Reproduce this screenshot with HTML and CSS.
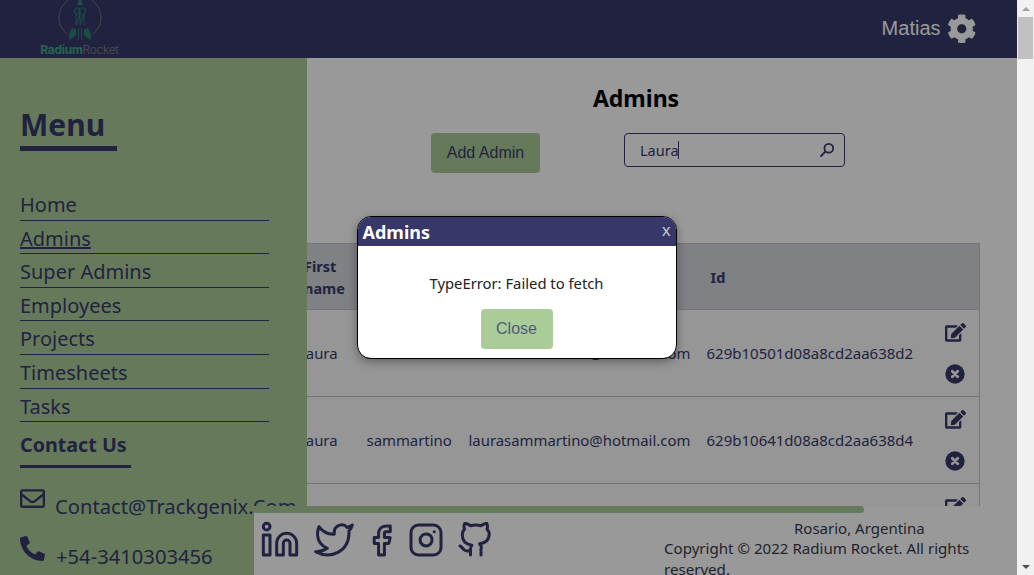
FILE: index.html
```html
<!DOCTYPE html>
<html lang="en">
<head>
<meta charset="utf-8">
<title>Admins</title>
<link rel="stylesheet" href="styles.css">
</head>
<body>
<div class="window">
  <div class="page">
    <header class="topbar">
      <div class="logo">
        <svg class="logo-mark" viewBox="0 0 44 40" aria-hidden="true">
          <path class="logo-ring" d="M9 33A21 21 0 1 1 35 33"/>
          <path class="logo-body" d="M22 -4L25 4H19Z"/>
          <path class="logo-line" d="M17 7H27M18 7C16 9 16 11 18 13V24M22 7V24M18 13H22M22 7C20 9 20 11 22 13M26 7C28 9 28 11 26 13V24M22 13H26M22 13L18 24M26 13L22 24"/>
          <path class="logo-body" d="M14 27L11 33V39L17 35H18V28ZM30 27L33 33V39L27 35H26V28ZM20 27H21V39H20ZM23 27H24V39H23Z"/>
        </svg>
        <div class="logo-text"><b>Radium</b><span>Rocket</span></div>
      </div>
      <div class="user">
        <span class="user-name">Matias</span>
        <svg class="gear" viewBox="0 0 512 512" aria-hidden="true"><path d="M487.4 315.7l-42.6-24.6c4.3-23.2 4.3-47 0-70.2l42.6-24.6c4.9-2.8 7.1-8.6 5.5-14-11.1-35.6-30-67.8-54.7-94.6-3.8-4.1-10-5.1-14.8-2.3L380.8 110c-17.9-15.4-38.5-27.3-60.8-35.1V25.8c0-5.6-3.9-10.5-9.4-11.7-36.7-8.2-74.3-7.8-109.2 0-5.5 1.2-9.4 6.1-9.4 11.7V75c-22.2 7.9-42.8 19.8-60.8 35.1L88.7 85.5c-4.9-2.8-11-1.9-14.8 2.3-24.7 26.7-43.6 58.9-54.7 94.6-1.7 5.4.6 11.2 5.5 14L67.3 221c-4.3 23.2-4.3 47 0 70.2l-42.6 24.6c-4.9 2.8-7.1 8.6-5.5 14 11.1 35.6 30 67.8 54.7 94.6 3.8 4.1 10 5.1 14.8 2.3l42.6-24.6c17.9 15.4 38.5 27.3 60.8 35.1v49.2c0 5.6 3.9 10.5 9.4 11.7 36.7 8.2 74.3 7.8 109.2 0 5.5-1.2 9.4-6.1 9.4-11.7v-49.2c22.2-7.9 42.8-19.8 60.8-35.1l42.6 24.6c4.9 2.8 11 1.9 14.8-2.3 24.7-26.7 43.6-58.9 54.7-94.6 1.5-5.5-.7-11.3-5.6-14.1zM256 336c-44.1 0-80-35.9-80-80s35.9-80 80-80 80 35.9 80 80-35.9 80-80 80z"/></svg>
      </div>
    </header>
    <div class="layout">
      <aside class="sidebar">
        <h2 class="menu-title">Menu</h2>
        <nav class="menu">
          <a class="menu-item">Home</a>
          <a class="menu-item menu-item-active">Admins</a>
          <a class="menu-item">Super Admins</a>
          <a class="menu-item">Employees</a>
          <a class="menu-item">Projects</a>
          <a class="menu-item">Timesheets</a>
          <a class="menu-item">Tasks</a>
        </nav>
        <h3 class="contact-title">Contact Us</h3>
        <div class="contact-line contact-mail">
          <svg class="contact-icon" viewBox="0 0 512 512" aria-hidden="true"><path d="M464 64H48C21.49 64 0 85.49 0 112v288c0 26.51 21.49 48 48 48h416c26.51 0 48-21.49 48-48V112c0-26.51-21.49-48-48-48zm0 48v40.805c-22.422 18.259-58.168 46.651-134.587 106.49-16.841 13.247-50.201 45.072-73.413 44.701-23.208.375-56.579-31.459-73.413-44.701C106.18 199.465 70.425 171.067 48 152.805V112h416zM48 400V214.398c22.914 18.251 55.409 43.862 104.938 82.646 21.857 17.205 60.134 55.186 103.062 54.955 42.717.231 80.509-37.199 103.053-54.947 49.528-38.783 82.032-64.401 104.947-82.653V400H48z"/></svg>
          <span>Contact@Trackgenix.Com</span>
        </div>
        <div class="contact-line contact-phone">
          <svg class="contact-icon" viewBox="0 0 512 512" aria-hidden="true"><path d="M497.39 361.8l-112-48a24 24 0 0 0-28 6.9l-49.6 60.6A370.66 370.66 0 0 1 130.6 204.11l60.6-49.6a23.94 23.94 0 0 0 6.9-28l-48-112A24.16 24.16 0 0 0 122.6.61l-104 24A24 24 0 0 0 0 48c0 256.5 207.9 464 464 464a24 24 0 0 0 23.4-18.6l24-104a24.29 24.29 0 0 0-14.01-27.6z"/></svg>
          <span>+54-3410303456</span>
        </div>
      </aside>
      <div class="content-column">
        <main class="content">
          <h1 class="page-title">Admins</h1>
          <div class="toolbar">
            <button class="add-button">Add Admin</button>
            <div class="search">
              <span class="search-text">Laura</span><span class="caret"></span>
              <svg class="search-icon" viewBox="0 0 16 16" aria-hidden="true"><circle cx="9.8" cy="6.2" r="4.4"/><path d="M6.6 9.4L2 14"/></svg>
            </div>
          </div>
          <table class="admins">
            <colgroup>
              <col class="col-first"><col class="col-last"><col class="col-email"><col class="col-id"><col class="col-actions">
            </colgroup>
            <thead>
              <tr><th class="th-first">First name</th><th></th><th></th><th class="th-id">Id</th><th></th></tr>
            </thead>
            <tbody>
              <tr>
                <td>Laura</td><td>sammartino</td><td>laurasammartino@hotmail.com</td><td class="td-id">629b10501d08a8cd2aa638d2</td>
                <td class="td-actions"><div class="actions">
                  <svg class="edit" viewBox="0 0 576 512" aria-hidden="true"><path d="M402.6 83.2l90.2 90.2c3.8 3.8 3.8 10 0 13.8L274.4 405.6l-92.8 10.3c-12.4 1.4-22.9-9.1-21.5-21.5l10.3-92.8L388.8 83.2c3.8-3.8 10-3.8 13.8 0zm162-22.9l-48.8-48.8c-15.2-15.2-39.9-15.2-55.2 0l-35.4 35.4c-3.8 3.8-3.8 10 0 13.8l90.2 90.2c3.8 3.8 10 3.8 13.8 0l35.4-35.4c15.2-15.3 15.2-40 0-55.2zM384 346.2V448H64V128h229.8c3.2 0 6.2-1.3 8.5-3.5l40-40c7.6-7.6 2.2-20.5-8.5-20.5H48C21.5 64 0 85.5 0 112v352c0 26.5 21.5 48 48 48h352c26.5 0 48-21.5 48-48V306.2c0-10.7-12.9-16-20.5-8.5l-40 40c-2.2 2.3-3.5 5.3-3.5 8.5z"/></svg>
                  <svg class="remove" viewBox="0 0 512 512" aria-hidden="true"><circle class="remove-disc" cx="256" cy="256" r="248"/><path class="remove-x" d="M186 186L326 326M326 186L186 326"/></svg>
                </div></td>
              </tr>
              <tr>
                <td>Laura</td><td>sammartino</td><td>laurasammartino@hotmail.com</td><td class="td-id">629b10641d08a8cd2aa638d4</td>
                <td class="td-actions"><div class="actions">
                  <svg class="edit" viewBox="0 0 576 512" aria-hidden="true"><path d="M402.6 83.2l90.2 90.2c3.8 3.8 3.8 10 0 13.8L274.4 405.6l-92.8 10.3c-12.4 1.4-22.9-9.1-21.5-21.5l10.3-92.8L388.8 83.2c3.8-3.8 10-3.8 13.8 0zm162-22.9l-48.8-48.8c-15.2-15.2-39.9-15.2-55.2 0l-35.4 35.4c-3.8 3.8-3.8 10 0 13.8l90.2 90.2c3.8 3.8 10 3.8 13.8 0l35.4-35.4c15.2-15.3 15.2-40 0-55.2zM384 346.2V448H64V128h229.8c3.2 0 6.2-1.3 8.5-3.5l40-40c7.6-7.6 2.2-20.5-8.5-20.5H48C21.5 64 0 85.5 0 112v352c0 26.5 21.5 48 48 48h352c26.5 0 48-21.5 48-48V306.2c0-10.7-12.9-16-20.5-8.5l-40 40c-2.2 2.3-3.5 5.3-3.5 8.5z"/></svg>
                  <svg class="remove" viewBox="0 0 512 512" aria-hidden="true"><circle class="remove-disc" cx="256" cy="256" r="248"/><path class="remove-x" d="M186 186L326 326M326 186L186 326"/></svg>
                </div></td>
              </tr>
              <tr>
                <td></td><td></td><td></td><td></td>
                <td class="td-actions"><div class="actions">
                  <svg class="edit" viewBox="0 0 576 512" aria-hidden="true"><path d="M402.6 83.2l90.2 90.2c3.8 3.8 3.8 10 0 13.8L274.4 405.6l-92.8 10.3c-12.4 1.4-22.9-9.1-21.5-21.5l10.3-92.8L388.8 83.2c3.8-3.8 10-3.8 13.8 0zm162-22.9l-48.8-48.8c-15.2-15.2-39.9-15.2-55.2 0l-35.4 35.4c-3.8 3.8-3.8 10 0 13.8l90.2 90.2c3.8 3.8 10 3.8 13.8 0l35.4-35.4c15.2-15.3 15.2-40 0-55.2zM384 346.2V448H64V128h229.8c3.2 0 6.2-1.3 8.5-3.5l40-40c7.6-7.6 2.2-20.5-8.5-20.5H48C21.5 64 0 85.5 0 112v352c0 26.5 21.5 48 48 48h352c26.5 0 48-21.5 48-48V306.2c0-10.7-12.9-16-20.5-8.5l-40 40c-2.2 2.3-3.5 5.3-3.5 8.5z"/></svg>
                </div></td>
              </tr>
            </tbody>
          </table>
        </main>
        <footer class="footer">
          <div class="footer-band"></div>
          <div class="footer-body">
            <div class="socials">
              <svg class="social social-linkedin" viewBox="0 0 24 24" aria-hidden="true"><path d="M16 8a6 6 0 0 1 6 6v7h-4v-7a2 2 0 0 0-2-2 2 2 0 0 0-2 2v7h-4v-7a6 6 0 0 1 6-6z"/><rect x="2" y="9" width="4" height="12"/><circle cx="4" cy="4" r="2"/></svg>
              <svg class="social social-twitter" viewBox="0 0 24 24" aria-hidden="true"><path d="M23 3a10.9 10.9 0 0 1-3 1.5 4.48 4.48 0 0 0-7.86 3v1A10.66 10.66 0 0 1 3 4s-4 9 5 13a11.64 11.64 0 0 1-7 2c9 5 20 0 20-11.5a4.5 4.5 0 0 0-.08-.83A7.72 7.72 0 0 0 23 3z"/></svg>
              <svg class="social social-facebook" viewBox="0 0 24 24" aria-hidden="true"><path d="M18 2h-3a5 5 0 0 0-5 5v3H7v4h3v8h4v-8h3l1-4h-4V7a1 1 0 0 1 1-1h3z"/></svg>
              <svg class="social social-instagram" viewBox="0 0 24 24" aria-hidden="true"><rect x="2" y="2" width="20" height="20" rx="5" ry="5"/><path d="M16 11.37A4 4 0 1 1 12.63 8 4 4 0 0 1 16 11.37z"/><line x1="17.5" y1="6.5" x2="17.51" y2="6.5"/></svg>
              <svg class="social social-github" viewBox="0 0 24 24" aria-hidden="true"><path d="M9 19c-5 1.5-5-2.5-7-3m14 6v-3.87a3.37 3.37 0 0 0-.94-3.61c3.14-.35 6.44-1.54 6.44-7A5.44 5.44 0 0 0 20 4.77 5.07 5.07 0 0 0 19.91 1S18.73.65 16 2.48a13.38 13.38 0 0 0-7 0C6.27.65 5.09 1 5.09 1A5.07 5.07 0 0 0 5 4.77a5.44 5.44 0 0 0-1.5 3.75c0 5.42 3.3 6.61 6.44 7A3.37 3.37 0 0 0 9 18.13V22"/></svg>
            </div>
            <div class="legal">
              <p class="legal-place">Rosario, Argentina</p>
              <p class="legal-copy">Copyright © 2022 Radium Rocket. All rights reserved.</p>
            </div>
          </div>
        </footer>
      </div>
    </div>
    <div class="overlay">
      <div class="modal">
        <div class="modal-head">
          <span class="modal-title">Admins</span>
          <span class="modal-x">x</span>
        </div>
        <div class="modal-body">
          <p class="modal-text">TypeError: Failed to fetch</p>
          <button class="modal-close">Close</button>
        </div>
      </div>
    </div>
  </div>
  <div class="scrollbar">
    <div class="scroll-arrow"><span class="arrow-up"></span></div>
    <div class="scroll-track"><div class="scroll-thumb"></div></div>
    <div class="scroll-arrow"><span class="arrow-down"></span></div>
  </div>
</div>
</body>
</html>
```
FILE: styles.css
```css
* { box-sizing: border-box; }
html, body { margin: 0; padding: 0; height: 100%; overflow: hidden; }
body { font-family: "Noto Sans", "Open Sans", sans-serif; color: #373a6b; background: #fff; }
p, h1, h2, h3 { margin: 0; }

.window { display: flex; width: 1034px; height: 575px; overflow: hidden; }
.page { position: relative; flex: 0 0 1017px; height: 575px; display: flex; flex-direction: column; overflow: hidden; }

/* top bar */
.topbar { flex: 0 0 58px; background: #373a6b; display: flex; justify-content: space-between; align-items: center; padding: 0 41px 0 40px; overflow: hidden; }
.logo { display: flex; flex-direction: column; align-items: center; width: 79px; }
.logo-mark { width: 44px; height: 40px; margin-top: -2px; overflow: visible; display: block; }
.logo-ring { fill: none; stroke: #aacc98; stroke-width: .6; opacity: .7; }
.logo-body { fill: #2a7f70; }
.logo-line { fill: none; stroke: #2a7f70; stroke-width: 1.1; }
.logo-text { font-family: "Inter", sans-serif; font-size: 12px; line-height: 13px; letter-spacing: -.3px; white-space: nowrap; margin-top: 2px; }
.logo-text b { color: #3fa884; font-weight: 700; }
.logo-text span { color: #7d8290; font-weight: 300; }
.user { display: flex; align-items: center; gap: 6px; }
.user-name { font-family: "Liberation Sans", Arial, sans-serif; font-size: 20px; color: #fff; margin-top: -2px; }
.gear { width: 29.5px; height: 29.5px; fill: #fff; display: block; }

/* layout */
.layout { flex: 1; display: flex; min-height: 0; }
.sidebar { position: relative; z-index: 1; flex: 0 0 307px; margin-right: -53px; background: #aacc98; padding: 44px 0 0 20px; }
.menu-title { font-size: 30px; line-height: 46px; font-weight: 700; color: #373a6b; width: 97px; border-bottom: 5px solid #373a6b; height: 49px; margin-bottom: 36px; }
.menu { display: flex; flex-direction: column; width: 249px; }
.menu-item { font-size: 20px; line-height: 36px; height: 33.6px; border-bottom: 1px solid #373a6b; color: #373a6b; }
.menu-item-active { text-decoration: underline; }
.contact-title { font-size: 19.7px; line-height: 28px; font-weight: 700; width: 111px; height: 37px; border-bottom: 3px solid #373a6b; margin-top: 9px; margin-bottom: 24px; color: #373a6b; white-space: nowrap; }
.contact-line { display: flex; font-size: 20.2px; line-height: 28px; color: #373a6b; white-space: nowrap; }
.contact-mail { align-items: flex-start; gap: 10px; margin-bottom: 22px; }
.contact-phone { align-items: flex-start; gap: 11px; }
.contact-icon { width: 25px; height: 25px; fill: #373a6b; flex: none; display: block; margin-top: -6px; }

/* main column */
.content-column { flex: 1; min-width: 0; display: flex; flex-direction: column; }
.content { flex: 1; min-height: 0; overflow: hidden; padding-top: 25px; }
.page-title { font-size: 23px; line-height: 30px; font-weight: 700; text-align: center; color: #000; margin-left: 1px; }
.toolbar { display: flex; margin-top: 20px; margin-left: 177px; align-items: flex-start; }
.add-button { width: 109px; height: 40px; border: 0; border-radius: 4px; background: #aacc98; font-family: "Liberation Sans", Arial, sans-serif; font-size: 16px; color: #373a6b; padding: 0; }
.search { display: flex; align-items: center; width: 221px; height: 34px; margin-left: 84px; border: 1px solid #373a6b; border-radius: 4px; padding-left: 15px; background: #fff; font-size: 14.5px; color: #373a6b; }
.caret { width: 1px; height: 18px; background: #373a6b; margin-left: -1px; }
.search-icon { width: 16px; height: 16px; margin-left: auto; margin-right: 9px; fill: none; stroke: #373a6b; stroke-width: 1.8; stroke-linecap: round; }
.admins { table-layout: fixed; border-collapse: collapse; width: 692px; margin-left: 33px; margin-top: 70px; color: #373a6b; font-size: 14.9px; }
.col-first { width: 63px; }
.col-last { width: 102px; }
.col-email { width: 238px; }
.col-id { width: 239px; }
.col-actions { width: 50px; }
.admins thead tr { height: 66px; background: #d6d8de; border: 1px solid #c4c4cc; }
.admins th { text-align: left; font-size: 14.5px; line-height: 22px; font-weight: 700; padding: 0 0 0 16px; }
.admins .th-first { padding-left: 16px; }
.admins .th-id { padding-left: 20px; }
.admins tbody tr { height: 87px; background: #fafafa; border: 1px solid #c4c4cc; }
.admins td { padding: 0 0 0 16px; white-space: nowrap; }
.admins td:first-child { padding-left: 10px; }
.admins .td-id { font-size: 15px; }
.admins .td-actions { padding-left: 15.5px; }
.actions { display: flex; flex-direction: column; gap: 22px; height: 86px; padding-top: 13px; }
.edit { width: 21px; height: 18.7px; fill: #373a6b; display: block; }
.remove { width: 20px; height: 20px; display: block; }
.remove-disc { fill: #373a6b; }
.remove-x { fill: none; stroke: #fafafa; stroke-width: 72; stroke-linecap: round; }

/* footer */
.footer { position: relative; z-index: 2; flex: 0 0 69px; background: #fff; overflow: hidden; }
.footer-band { height: 7px; width: 610px; background: #aacc98; border-radius: 2px 4px 4px 2px; }
.footer-body { display: flex; }
.socials { display: flex; align-items: center; height: 54px; padding-left: 6px; flex: 0 0 410px; }
.social { fill: none; stroke: #373a6b; stroke-width: 1.8; stroke-linecap: round; stroke-linejoin: round; display: block; flex: none; }
.social-linkedin { width: 40px; height: 40px; }
.social-twitter { width: 40px; height: 40px; margin-left: 13.5px; }
.social-facebook { width: 35px; height: 35px; margin-left: 10.5px; stroke-width: 2.05; }
.social-instagram { width: 36px; height: 36px; margin-left: 8.5px; stroke-width: 2; }
.social-github { width: 36px; height: 36px; margin-left: 13.5px; stroke-width: 2; }
.legal { font-size: 15.1px; line-height: 21px; width: 320px; color: #3a3a4a; }
.legal-place { padding-left: 130px; margin-top: 5px; font-size: 15px; }
.legal-copy { margin-top: -1px; }

/* modal */
.overlay { position: absolute; inset: 0; z-index: 5; background: rgba(0,0,0,.4); display: flex; align-items: center; justify-content: center; padding-left: 16px; }
.modal { width: 320px; height: 143px; background: #fff; border: 1px solid #000; border-radius: 14px; overflow: hidden; box-shadow: 0 3px 10px rgba(0,0,0,.35); }
.modal-head { height: 29px; background: #373769; display: flex; justify-content: space-between; align-items: center; padding: 0 5px; color: #fff; }
.modal-title { font-size: 18px; font-weight: 700; }
.modal-x { font-family: "Liberation Sans", Arial, sans-serif; font-size: 17px; color: #ccc; margin-top: -2px; }
.modal-body { display: flex; flex-direction: column; align-items: center; }
.modal-text { font-size: 14.8px; line-height: 20px; color: #222; margin-top: 27px; }
.modal-close { width: 72px; height: 40px; margin-top: 16px; border: 0; border-radius: 4px; background: #aacc98; font-family: "Liberation Sans", Arial, sans-serif; font-size: 16px; color: #505a78; padding: 0; }

/* scrollbar */
.scrollbar { flex: 0 0 17px; background: #f1f1f1; display: flex; flex-direction: column; }
.scroll-arrow { flex: 0 0 17px; display: flex; align-items: center; justify-content: center; }
.scroll-track { flex: 1; padding: 0 1px; }
.scroll-thumb { height: 42px; background: #c1c1c1; }
.arrow-up { width: 0; height: 0; border: 4px solid transparent; border-top: 0; border-bottom: 4px solid #a3a3a3; }
.arrow-down { width: 0; height: 0; border: 4px solid transparent; border-bottom: 0; border-top: 4px solid #505050; }
```
